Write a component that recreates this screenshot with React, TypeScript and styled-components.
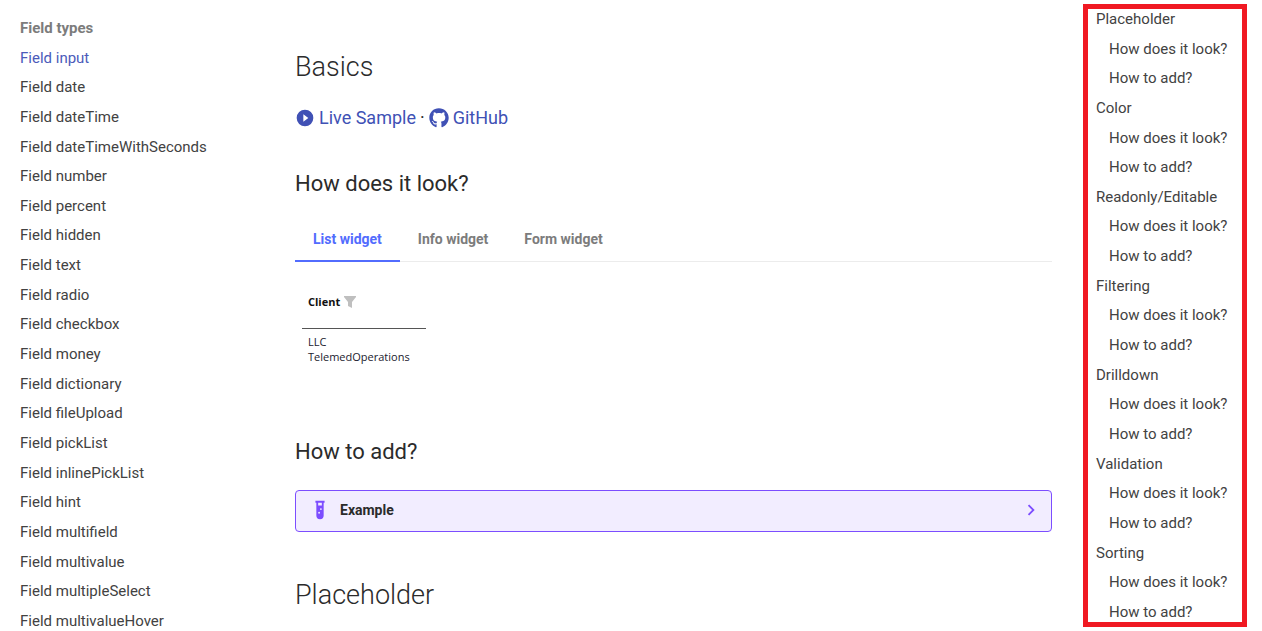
import React, { useState } from "react";
import styled, { createGlobalStyle } from "styled-components";
import { FaGithub } from "react-icons/fa";

const GlobalStyle = createGlobalStyle`
  *, *::before, *::after { box-sizing: border-box; }
  html { overflow: hidden; }
  body {
    margin: 0;
    background: #fff;
    color: #2b2b2b;
    font-family: Roboto, "Liberation Sans", sans-serif;
    font-size: 18px;
  }
`;

const Page = styled.div`
  display: flex;
  align-items: flex-start;
  height: 100vh;
  overflow: hidden;
`;

const NavColumn = styled.nav`
  display: flex;
  flex-direction: column;
  justify-content: space-between;
  flex: 0 0 295px;
  min-height: 100vh;
  padding: 18px 20px 0;
`;

const NavTitle = styled.span`
  color: #7c7c7c;
  font-size: 15px;
  font-weight: 700;
  line-height: 20px;
`;

const NavLink = styled.a<{ $active?: boolean; $nested?: boolean }>`
  padding-left: ${(p) => (p.$nested ? 13 : 0)}px;
  color: ${(p) => (p.$active ? "#4b5bba" : "#424242")};
  font-size: 15px;
  line-height: 20px;
  text-decoration: none;
  white-space: nowrap;
`;

const Toc = styled.nav`
  display: flex;
  flex-direction: column;
  justify-content: space-between;
  flex: 0 0 164px;
  min-height: calc(100vh - 8px);
  margin: 4px 15px 4px 31px;
  padding: 0 8px;
  border: 5px solid #f01922;
`;

const Content = styled.main`
  flex: 1 1 0;
  min-width: 0;
  padding-top: 49px;
`;

const Title = styled.h2`
  margin: 0;
  color: #2b2b2b;
  font-size: 27px;
  font-weight: 300;
  line-height: 36px;
`;

const Subtitle = styled.h3`
  margin: 0;
  font-size: 22px;
  font-weight: 400;
  line-height: 32px;
`;

const Links = styled.p`
  display: flex;
  align-items: center;
  gap: 4px;
  margin: 19px 0 36px;
  line-height: 28px;
`;

const IconLink = styled.a`
  display: flex;
  align-items: center;
  gap: 4px;
  color: #4051b5;
  text-decoration: none;
`;

const TabBar = styled.div`
  display: flex;
  margin-top: 18px;
  border-bottom: 1px solid #ececec;
`;

const Tab = styled.button<{ $active: boolean }>`
  height: 44px;
  margin-bottom: -1px;
  padding: 0 18px;
  border: 0;
  border-bottom: 2px solid ${(p) => (p.$active ? "#526cfe" : "transparent")};
  background: none;
  color: ${(p) => (p.$active ? "#526cfe" : "#7c7c7c")};
  font-family: inherit;
  font-size: 14px;
  font-weight: 700;
  cursor: pointer;
`;

const Widget = styled.table`
  width: 124px;
  margin: 14px 0 67px 7px;
  border-collapse: collapse;
  color: #1a1a2e;
  font-family: "Open Sans", "Noto Sans", sans-serif;
  font-size: 11px;
  line-height: 15px;
  text-align: left;
`;

const HeadCell = styled.th`
  height: 52px;
  padding: 0 6px;
  border-bottom: 1px solid #555;
  color: #111;
  font-weight: 700;
`;

const HeadLabel = styled.span`
  display: flex;
  align-items: center;
  gap: 4px;
`;

const Cell = styled.td`
  padding: 5px 6px;
`;

const Example = styled.button`
  display: flex;
  align-items: center;
  width: 100%;
  height: 42px;
  margin: 22px 0 45px;
  padding: 0 9px 2px 13px;
  border: 1px solid #7c4dff;
  border-radius: 4px;
  background: #f2edff;
  color: #2b2b2b;
  font-family: inherit;
  font-size: 14px;
  font-weight: 700;
  text-align: left;
  cursor: pointer;
`;

const ExampleLabel = styled.span`
  flex: 1;
  padding-left: 9px;
`;

const fields = [
  "input", "date", "dateTime", "dateTimeWithSeconds", "number", "percent", "hidden",
  "text", "radio", "checkbox", "money", "dictionary", "fileUpload", "pickList",
  "inlinePickList", "hint", "multifield", "multivalue", "multipleSelect", "multivalueHover",
];
const sections = ["Placeholder", "Color", "Readonly/Editable", "Filtering", "Drilldown", "Validation", "Sorting"];
const tabs = ["List widget", "Info widget", "Form widget"];

const MaterialIcon = ({ d, color, size = 20 }: { d: string; color: string; size?: number }) => (
  <svg width={size} height={size} viewBox="0 0 24 24" fill={color} aria-hidden="true">
    <path d={d} />
  </svg>
);

const PLAY = "M10 16.5v-9l6 4.5M12 2A10 10 0 0 0 2 12a10 10 0 0 0 10 10 10 10 0 0 0 10-10A10 10 0 0 0 12 2Z";
const TUBE =
  "M7 2v2h1v14a4 4 0 0 0 4 4 4 4 0 0 0 4-4V4h1V2H7m4 14c-.6 0-1-.4-1-1s.4-1 1-1 1 .4 1 1-.4 1-1 1m2-4c-.6 0-1-.4-1-1s.4-1 1-1 1 .4 1 1-.4 1-1 1m1-5h-4V4h4v3Z";
const CHEVRON = "M8.59 16.58 13.17 12 8.59 7.41 10 6l6 6-6 6-1.41-1.42Z";

export default function App() {
  const [active, setActive] = useState(0);
  return (
    <Page>
      <GlobalStyle />
      <NavColumn aria-label="Field types">
        <NavTitle>Field types</NavTitle>
        {fields.map((name, i) => (
          <NavLink key={name} href={`#${name}`} $active={i === 0}>
            Field {name}
          </NavLink>
        ))}
      </NavColumn>
      <Content>
        <Title>Basics</Title>
        <Links>
          <IconLink href="#sample">
            <MaterialIcon d={PLAY} color="#4051b5" />
            Live Sample
          </IconLink>
          ·
          <IconLink href="#github">
            <FaGithub size={20} aria-hidden="true" />
            GitHub
          </IconLink>
        </Links>
        <Subtitle>How does it look?</Subtitle>
        <TabBar role="tablist">
          {tabs.map((label, i) => (
            <Tab key={label} role="tab" aria-selected={i === active} $active={i === active} onClick={() => setActive(i)}>
              {label}
            </Tab>
          ))}
        </TabBar>
        <Widget>
          <thead>
            <tr>
              <HeadCell>
                <HeadLabel>
                  Client
                  <svg width="12" height="12" viewBox="0 0 12 12" fill="#bfbfbf" aria-hidden="true">
                    <path d="M0 0h12v1L8 6v6L4 10V6L0 1Z" />
                  </svg>
                </HeadLabel>
              </HeadCell>
            </tr>
          </thead>
          <tbody>
            <tr>
              <Cell>LLC TelemedOperations</Cell>
            </tr>
          </tbody>
        </Widget>
        <Subtitle>How to add?</Subtitle>
        <Example>
          <MaterialIcon d={TUBE} color="#7c4dff" size={22} />
          <ExampleLabel>Example</ExampleLabel>
          <MaterialIcon d={CHEVRON} color="#7c4dff" size={22} />
        </Example>
        <Title>Placeholder</Title>
      </Content>
      <Toc aria-label="Table of contents">
        {sections.map((section) => (
          <React.Fragment key={section}>
            <NavLink href={`#${section}`}>{section}</NavLink>
            <NavLink href={`#${section}-look`} $nested>How does it look?</NavLink>
            <NavLink href={`#${section}-add`} $nested>How to add?</NavLink>
          </React.Fragment>
        ))}
      </Toc>
    </Page>
  );
}
